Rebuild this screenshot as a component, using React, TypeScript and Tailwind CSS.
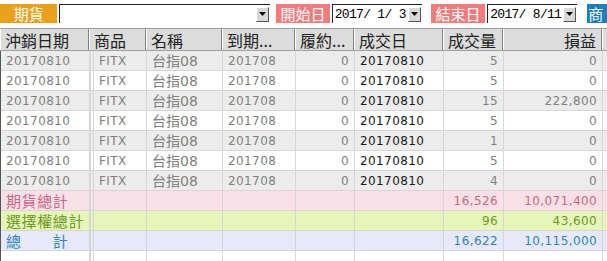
import React from "react";

const cols = [
  { w: "w-[89px]", align: "left" },
  { w: "w-[57px]", align: "left" },
  { w: "w-[76px]", align: "left" },
  { w: "w-[73px]", align: "left" },
  { w: "w-[59px]", align: "right" },
  { w: "w-[89px]", align: "left" },
  { w: "w-[60px]", align: "right" },
  { w: "w-[99px]", align: "right" },
];

const headers = ["沖銷日期", "商品", "名稱", "到期...", "履約...", "成交日", "成交量", "損益"];

const rows = [
  ["20170810", "FITX", "台指08", "201708", "0", "20170810", "5", "0"],
  ["20170810", "FITX", "台指08", "201708", "0", "20170810", "5", "0"],
  ["20170810", "FITX", "台指08", "201708", "0", "20170810", "15", "222,800"],
  ["20170810", "FITX", "台指08", "201708", "0", "20170810", "5", "0"],
  ["20170810", "FITX", "台指08", "201708", "0", "20170810", "1", "0"],
  ["20170810", "FITX", "台指08", "201708", "0", "20170810", "5", "0"],
  ["20170810", "FITX", "台指08", "201708", "0", "20170810", "4", "0"],
];

const totals = [
  { label: "期貨總計", qty: "16,526", pl: "10,071,400", bg: "bg-[#f9dfe7]", fg: "text-[#c86a82]" },
  { label: "選擇權總計", qty: "96", pl: "43,600", bg: "bg-[#e6f6b8]", fg: "text-[#6e9a22]" },
  { label: "總\u3000\u3000計", qty: "16,622", pl: "10,115,000", bg: "bg-[#e7e9fb]", fg: "text-[#2b86bb]" },
];

const dataFont = { fontFamily: '"DejaVu Sans", "Noto Sans CJK TC", sans-serif' };
const cjkFont = { fontFamily: '"Noto Sans CJK TC", "DejaVu Sans", sans-serif' };
const monoFont = { fontFamily: '"Liberation Mono", monospace' };

function DropBtn() {
  return (
    <div className="w-[13px] h-[15px] bg-[#d8d8d8] border border-t-white border-l-white border-r-[#555] border-b-[#555] flex items-center justify-center shrink-0">
      <svg width="7" height="4" viewBox="0 0 7 4">
        <polygon points="0,0 7,0 3.5,4" fill="#000" />
      </svg>
    </div>
  );
}

function DateField({ text }: { text: string }) {
  return (
    <div className="w-[90px] h-[19px] bg-white border-l border-t border-[#222] flex items-center justify-between pl-[2px] pr-[1px]">
      <span className="text-[13px] tracking-[-0.7px] text-black whitespace-pre leading-none" style={monoFont}>{text}</span>
      <DropBtn />
    </div>
  );
}

function Cell({ i, children, cls = "" }: { i: number; children?: React.ReactNode; cls?: string }) {
  const c = cols[i];
  return (
    <div
      className={`${c.w} h-full shrink-0 flex items-center border-r border-[#d6d6d6] ${i === 1 ? "border-l-[4px] border-l-[#d6d6d6] border-double" : ""} ${c.align === "right" ? "justify-end pr-[5px]" : "pl-[5px]"} ${cls}`}
    >
      {children}
    </div>
  );
}

export default function App() {
  return (
    <div className="w-[607px] h-[261px] bg-white overflow-hidden">
      {/* toolbar */}
      <div className="h-[28px] flex items-start pt-[4px]">
        <div className="w-[58px] h-[19px] bg-[#e9a11b] text-white text-[15px] leading-none flex items-center justify-center" style={cjkFont}>期貨</div>
        <div className="ml-[2px] w-[213px] h-[19px] bg-white border-l border-t border-[#222] flex items-center justify-end pr-[1px]">
          <DropBtn />
        </div>
        <div className="ml-[6px] w-[54px] h-[19px] bg-[#f27b7b] text-white text-[15px] leading-none flex items-center justify-center" style={cjkFont}>開始日</div>
        <div className="ml-[2px]"><DateField text="2017/ 1/ 3" /></div>
        <div className="ml-[9px] w-[55px] h-[19px] bg-[#f27b7b] text-white text-[15px] leading-none flex items-center justify-center" style={cjkFont}>結束日</div>
        <div className="ml-[2px]"><DateField text="2017/ 8/11" /></div>
        <div className="ml-[10px] w-[20px] h-[19px] bg-[#1b7fc2] text-white text-[15px] leading-none flex items-center pl-[1px] overflow-hidden" style={cjkFont}>商</div>
      </div>

      {/* header */}
      <div className="h-[23px] flex bg-[#dcdcdc] border-t border-b border-[#a0a0a0]">
        {headers.map((h, i) => (
          <div
            key={i}
            className={`${cols[i].w} h-full shrink-0 flex items-center border-l border-l-white border-r border-r-[#808080] text-[16px] leading-none text-[#222] ${i === 7 ? "justify-end pr-[5px]" : "pl-[4px]"}`}
            style={cjkFont}
          >
            {h}
          </div>
        ))}
        <div className="flex-1 border-l border-white" />
      </div>

      {/* body */}
      <div className="border-l border-[#555]">
        {rows.map((r, ri) => (
          <div
            key={ri}
            className={`h-[20px] flex border-b border-[#d6d6d6] text-[12px] tracking-[0.4px] leading-none text-[#808080] ${ri % 2 === 0 ? "bg-[#ececec]" : "bg-white"}`}
            style={dataFont}
          >
            {r.map((v, i) => (
              <Cell key={i} i={i} cls={i === 5 ? "text-[#1a1a1a]" : i === 2 ? "text-[14px] tracking-normal" : ""}>
                {v}
              </Cell>
            ))}
            <div className="flex-1" />
          </div>
        ))}
        {totals.map((t, ti) => (
          <div key={ti} className={`h-[20px] flex border-b border-[#d6d6d6] ${t.bg} ${t.fg} text-[12px] tracking-[0.4px] leading-none`} style={dataFont}>
            {cols.map((_, i) => (
              <Cell key={i} i={i}>
                {i === 0 ? (
                  <span className="text-[15px] tracking-[0.6px] whitespace-pre" style={cjkFont}>{t.label}</span>
                ) : i === 6 ? t.qty : i === 7 ? t.pl : null}
              </Cell>
            ))}
            <div className="flex-1" />
          </div>
        ))}
        <div className="h-[20px] flex bg-white">
          {cols.map((_, i) => (
            <Cell key={i} i={i} />
          ))}
        </div>
      </div>
    </div>
  );
}
